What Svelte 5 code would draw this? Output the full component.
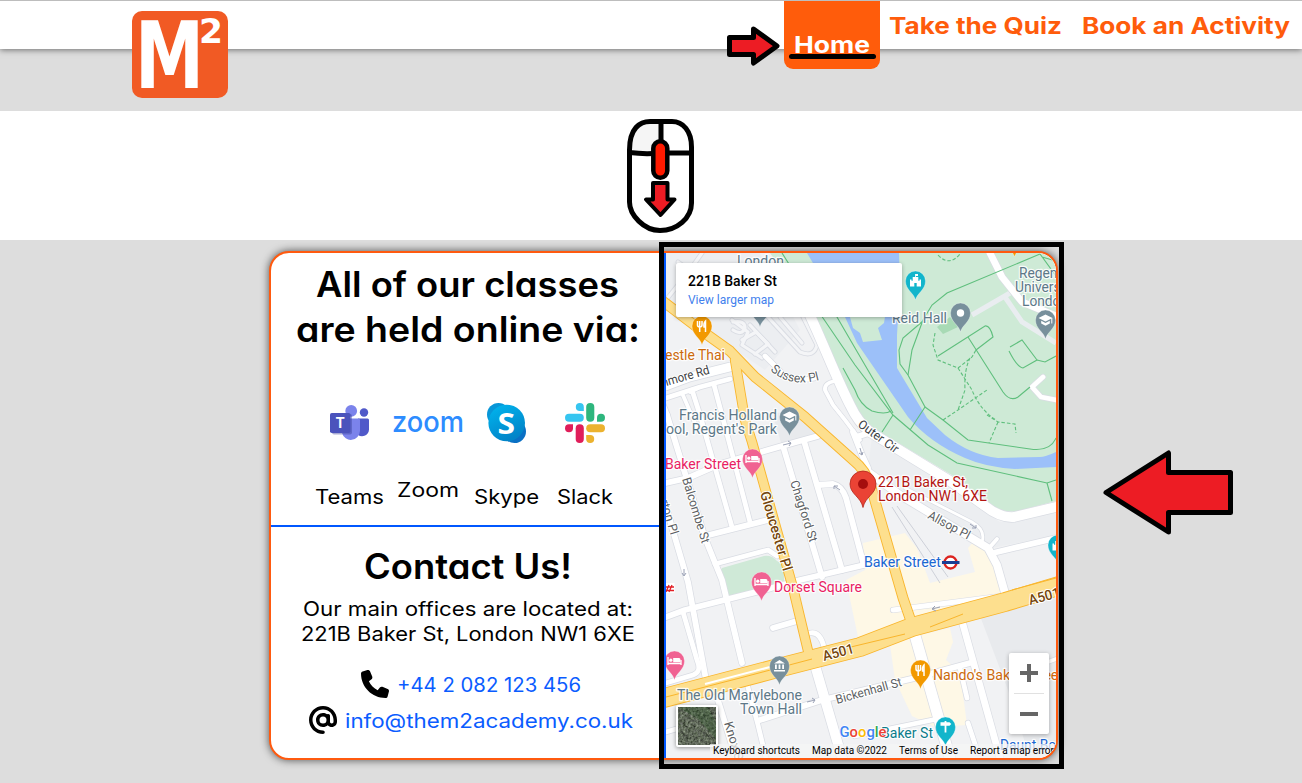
<script>
  const blocks = [
    '666,253 760,253 800,330 765,370 735,350 666,303',
  ];

  const minor = [
    ['M666,386 L690,377 L730,367', 9],
    ['M666,398 L700,387 L730,379', 5],
    ['M682,393 L698,430 M698,388 L690,392', 4],
    ['M667,415 L705,538 L722,580 L742,663', 6],
    ['M660,398 L667,415', 6],
    ['M692,390 L700,415 L732,527', 5],
    ['M714,385 L722,415 L750,522', 5],
    ['M666,483 L688,478 L720,464 L782,446 L818,436', 6],
    ['M705,536 L768,520', 6],
    ['M715,564 L768,550 L777,556', 5],
    ['M783,446 L822,577', 6],
    ['M804,441 L842,570', 6],
    ['M818,485 L833,484 Q842,486 846,498 L863,562', 6],
    ['M666,507 L688,582 L706,680', 6],
    ['M666,617 L685,610 L768,589 L800,580 L864,565', 6],
    ['M666,683 L693,675 Q702,672 697,660 L683,612', 5],
    ['M746,680 L758,725 L766,758', 5],
    ['M716,694 L736,758', 6],
    ['M773,628 L797,621', 6],
    ['M810,633 Q820,631 824,647', 5],
    ['M812,655 L842,758', 10],
    ['M666,732 L700,722', 5],
    ['M760,720 L822,700 L915,678 L970,663', 6],
    ['M914,632 L950,758', 11],
    ['M962,621 L1000,758', 7],
    ['M960,668 L967,698', 5],
    ['M968,723 L978,753', 5],
    ['M855,736 L937,719', 5],
    ['M1048,662 L1056,659', 4],
    ['M868,472 L900,495 L988,548 L997,565 L1005,593', 8],
    ['M993,553 L1056,538', 6],
    ['M990,547 L997,539', 4],
    ['M905,488 L972,522 Q986,530 982,542', 3],
    ['M853,432 L862,455 L868,468 M856,437 L872,432', 6],
    ['M805,305 C820,335 836,378 850,405 Q858,422 870,432 L950,481 L985,506 Q1000,518 1014,517 L1056,507', 10],
    ['M990,253 L1002,277 L1022,302 L1056,316', 7],
    ['M1043,377 L1032,387 L1041,397 L1056,400', 5],
    ['M815,378 Q790,384 777,368 L765,356', 5],
    ['M860,440 L845,420 L833,405 L825,390 Q824,383 835,381', 4],
    ['M893,610 L1010,595', 5],
  ];

  const lanes = [
    'M666,300 L690,270 L702,253', 'M678,262 L715,290', 'M732,320 L748,332 L742,345 L762,358', 'M742,340 L756,332 L768,344 L755,354',
    'M733,322 Q745,320 745,328 Q742,336 733,330', 'M768,317 L800,352 Q814,358 817,345 L803,317', 'M780,317 L802,343', 'M750,325 L775,352',
  ];

  const paths = [
    'M1040,254 L947,293 L932,305 L923,320 L912,350 L908,375',
    'M923,321 L903,338 L899,350 L900,364 L908,375 L925,407 L910,430',
    'M925,407 L943,420 L968,440 L1030,449 Q1050,452 1056,438',
    'M938,356 L985,326 Q990,325 993,337 L976,350',
    'M968,337 L1003,392 Q1010,402 1018,397 L1030,387',
    'M1010,347 L1022,340 L1037,360 L1023,368 Q1017,367 1009,351',
    'M1037,360 L1045,362 L1056,356',
    'M782,253 L823,318 L855,365 L893,415 L928,445 L957,463 L1047,483 L1056,480',
    'M830,305 L855,348 L893,413',
    'M843,368 L855,390 Q860,405 872,411 Q885,415 891,411',
    'M893,415 L882,432', 'M1047,483 L1052,501', 'M1040,254 L1056,276 M1042,257 L1056,261',
  ];

  const dashed = [
    'M935,333 L933,345 L938,360 L958,368 L972,357 L976,350', 'M970,358 Q964,370 965,390 L958,410',
    'M958,368 L972,390 Q980,410 996,420', 'M943,420 L958,410 L987,390', 'M987,415 L998,422 L1015,424 L1016,433', 'M998,422 L989,443',
    'M938,255 Q949,267 960,254',
  ];

  const major = [
    ['M735,360 L745,420 L752,442 L793,588 L809,655', 8.5],
    ['M660,299 L702,331 L730,351 L755,377 L805,417 L853,460 Q866,470 871,487 L903,598 L914,630', 9],
    ['M660,699 L778,668 L860,647 L912,627 L1005,602 L1062,585', 18],
  ];

  const pins = [
    { x: 760, y: 308, c: '#78909c', i: 'dot' }, { x: 702, y: 326, c: '#f29900', i: 'fork' },
    { x: 915.5, y: 281, c: '#12b5cb', i: 'castle' }, { x: 960.5, y: 313, c: '#78909c', i: 'dot' },
    { x: 1045.5, y: 320, c: '#78909c', i: 'cap' }, { x: 789.5, y: 417, c: '#78909c', i: 'cap' },
    { x: 752.5, y: 459, c: '#f06292', i: 'bed' }, { x: 761.5, y: 582, c: '#f06292', i: 'bed' },
    { x: 674.5, y: 661, c: '#f06292', i: 'bed' }, { x: 779.5, y: 666, c: '#78909c', i: 'hall' },
    { x: 920.5, y: 670, c: '#f29900', i: 'fork' }, { x: 945.5, y: 727, c: '#12b5cb', i: 'sign' },
    { x: 1058, y: 545, c: '#12b5cb', i: 'castle' }, { x: 1014.5, y: 238, c: '#f29900', i: 'dot' },
  ];

  const labels = [
    ['London', 737, 266, 47, 'poi'], ['Reid Hall', 892, 323, 55, 'poi'],
    ["Regent's", 1019, 278, 52, 'poi'], ['University', 1015, 292, 60, 'poi'], ['London', 1022, 306, 46, 'poi'],
    ['estle Thai', 665, 360, 60, 'food'], ['Francis Holland', 679, 420, 98, 'poi'], ["ool, Regent's Park", 666, 434, 111, 'poi'],
    ['Baker Street', 665, 469, 76, 'hotel'], ['Dorset Square', 774, 592, 88, 'hotel'],
    ['221B Baker St,', 878, 487, 90, 'red'], ['London NW1 6XE', 878, 501, 109, 'red'],
    ['Baker Street', 864, 567, 77, 'blue'], ['The Old Marylebone', 677, 700, 125, 'poi'], ['Town Hall', 740, 714, 62, 'poi'],
    ["Nando's Baker Street", 933, 680, 130, 'food'], ['Baker St', 881, 738, 52, 'teal'], ['Daunt Books', 1000, 750, 78, 'blue'],
  ];

  const streets = [
    ['nmore Rd', 663, 387, 49, -16, 'dark'], ['Balcombe St', 682, 479, 68, 73, ''], ['rton Pl', 660, 501, 36, 73, ''],
    ['Gloucester Pl', 760, 493, 82, 73.5, 'big'], ['Chagford St', 790, 482, 64, 72, ''],
    ['Outer Cir', 857, 426, 47, 36, 'dark'], ['Allsop Pl', 927, 518, 46, 28, ''],
    ['A501', 824, 661, 32, -15, 'big'], ['A501', 1030, 605, 32, -15, 'big'],
    ['Bickenhall St', 837, 704, 68, -15.5, ''], ['Knox St', 724, 723, 44, 73, ''],
  ];

  const terms = [['Keyboard shortcuts', 87], ['Map data ©2022', 75], ['Terms of Use', 59], ['Report a map error', 84]];
</script>

{#snippet fit(text, w, h, base, cls)}
  <svg class="fit {cls}" width={w} height={h}><text x="0" y={base} textLength={w} lengthAdjust="spacingAndGlyphs">{text}</text></svg>
{/snippet}

<header>
  <svg class="logo" width="96" height="87" viewBox="0 0 96 87">
    <rect width="96" height="87" rx="10" fill="#f15a24" />
    <text x="3" y="77" font-size="92" textLength="69" lengthAdjust="spacingAndGlyphs" class="logo-m">M</text>
    <text x="67" y="32" font-size="34" textLength="24" lengthAdjust="spacingAndGlyphs" class="logo-2">2</text>
  </svg>
  <nav>
    <a class="home" href="#home">{@render fit('Home', 76, 30, 24, 'nav')}</a>
    <a class="link" href="#quiz">{@render fit('Take the Quiz', 173, 30, 24, 'nav')}</a>
    <a class="link" href="#book">{@render fit('Book an Activity', 208, 30, 24, 'nav')}</a>
  </nav>
</header>

<section class="scroll">
  <svg width="68" height="116" viewBox="627 118 68 116">
    <path d="M629.500,153 V147 Q631,121.500 654,121.500 H661 V153Z" fill="#f5f5f5" />
    <path d="M629.500,150 C629.500,128 640,121.500 650,121.500 H672 C683,121.500 691.500,131 691.500,147 V203 C691.500,218 677,230.500 660,230.500 C644,230.500 629.500,215 629.500,202Z M629.500,152.500 Q645,154.500 660,153 H691 M661,121 V142" fill="none" stroke="#000" stroke-width="5" />
    <rect x="653.300" y="141.300" width="14" height="36.500" rx="7" fill="#ff1a00" stroke="#000" stroke-width="4.500" />
    <path d="M653,183 H667.500 V199.500 H674.500 L660.500,215 L646,199.500 H653Z" fill="#ed1c24" stroke="#000" stroke-width="4" stroke-linejoin="round" />
  </svg>
</section>

<main>
  <div class="card">
    <div class="info">
      <section class="classes">
        <h1>{@render fit('All of our classes', 303, 45, 36, 'title')}{@render fit('are held online via:', 344, 45, 36, 'title')}</h1>
        <div class="apps">
          <div class="app">
            <span class="icon">
              <svg width="40" height="36" viewBox="0 0 40 36">
                <circle cx="34" cy="7.500" r="4.200" fill="#5059c9" />
                <path d="M28,13.500 H37.500 Q39,13.500 39,15 V24.500 A7,7 0 0 1 28,30Z" fill="#5059c9" />
                <circle cx="21.200" cy="5.900" r="5.900" fill="#7b83eb" />
                <path d="M12,13.500 H28.500 Q30,13.500 30,15 V26 A9.200,9.600 0 0 1 12,28Z" fill="#7b83eb" />
                <rect x="2" y="9" width="20" height="20.500" rx="2" fill="#3d459c" opacity=".45" />
                <rect y="8" width="20.500" height="20" rx="1.800" fill="#4b53bc" />
                <text x="5.500" y="23" font-size="14" font-weight="700" fill="#fff">T</text>
              </svg>
            </span>
            {@render fit('Teams', 69, 25, 19, 'copy')}
          </div>
          <div class="app raised">
            <span class="icon"><svg width="72" height="40"><text class="zoomlogo" x="0" y="29" textLength="72" lengthAdjust="spacingAndGlyphs">zoom</text></svg></span>
            {@render fit('Zoom', 62, 25, 19, 'copy')}
          </div>
          <div class="app">
            <span class="icon">
              <svg width="40" height="40" viewBox="0 0 40 40">
                <defs><linearGradient id="sk" x1="0" y1="0" x2="0.500" y2="1"><stop offset="0" stop-color="#00b7f0" /><stop offset="1" stop-color="#0284c8" /></linearGradient></defs>
                <circle cx="11.500" cy="11.500" r="11.500" fill="#0796d8" /><circle cx="27.500" cy="28.500" r="11.500" fill="#0a70c4" />
                <circle cx="19.700" cy="20" r="18.300" fill="url(#sk)" />
                <text class="skype" x="10.500" y="30.500" textLength="17.500" lengthAdjust="spacingAndGlyphs">S</text>
              </svg>
            </span>
            {@render fit('Skype', 65, 25, 19, 'copy')}
          </div>
          <div class="app">
            <span class="icon">
              <svg width="40" height="40" viewBox="0 0 40 40">
                <path d="M14.800,0 A4,4 0 0 0 14.800,8 H18.800 V4 A4,4 0 0 0 14.800,0Z" fill="#36c5f0" /><rect y="10.700" width="18.800" height="8.100" rx="4" fill="#36c5f0" />
                <rect x="21.200" width="8.100" height="18.800" rx="4" fill="#2eb67d" /><path d="M40,14.800 A4,4 0 0 0 32,14.800 V18.800 H36 A4,4 0 0 0 40,14.800Z" fill="#2eb67d" />
                <rect x="21.200" y="21.200" width="18.800" height="8.100" rx="4" fill="#ecb22e" /><path d="M25.200,40 A4,4 0 0 0 25.200,32 H21.200 V36 A4,4 0 0 0 25.200,40Z" fill="#ecb22e" />
                <rect x="10.700" y="21.200" width="8.100" height="18.800" rx="4" fill="#e01e5a" /><path d="M0,25.200 A4,4 0 0 0 8,25.200 V21.200 H4 A4,4 0 0 0 0,25.200Z" fill="#e01e5a" />
              </svg>
            </span>
            {@render fit('Slack', 56, 25, 19, 'copy')}
          </div>
        </div>
      </section>
      <section class="contact">
        <h2>{@render fit('Contact Us!', 208, 45, 36, 'title')}</h2>
        <div class="address">{@render fit('Our main offices are located at:', 330, 25, 19, 'copy')}{@render fit('221B Baker St, London NW1 6XE', 334, 25, 19, 'copy')}</div>
        <div class="row">
          <svg width="28" height="28" viewBox="0 0 512 512"><path d="M164.9 24.6c-7.7-18.6-28-28.5-47.4-23.2l-88 24C12.1 30.2 0 46 0 64C0 311.4 200.6 512 448 512c18 0 33.8-12.1 38.6-29.5l24-88c5.3-19.4-4.6-39.7-23.2-47.4l-96-40c-16.3-6.8-35.2-2.1-46.3 11.6L304.7 368C234.3 334.7 177.3 277.7 144 207.3L193.3 167c13.7-11.2 18.4-30 11.6-46.3l-40-96z" /></svg>
          <a href="#tel">{@render fit('+44 2 082 123 456', 184, 36, 26, 'copy')}</a>
        </div>
        <div class="row">
          <svg width="28" height="28" viewBox="0 0 512 512"><path d="M256 64C150 64 64 150 64 256s86 192 192 192c17.700 0 32 14.300 32 32s-14.300 32-32 32C114.600 512 0 397.400 0 256S114.600 0 256 0S512 114.600 512 256v32c0 53-43 96-96 96c-29.300 0-55.600-13.200-73.200-33.900C320 371.100 289.500 384 256 384c-70.700 0-128-57.300-128-128s57.300-128 128-128c27.900 0 53.700 8.900 74.700 24.100c5.700-5 13.100-8.100 21.300-8.100c17.700 0 32 14.300 32 32v80 32c0 17.700 14.300 32 32 32s32-14.300 32-32V256c0-106-86-192-192-192zm64 192a64 64 0 1 0 -128 0 64 64 0 1 0 128 0z" /></svg>
          <a href="#mail">{@render fit('info@them2academy.co.uk', 288, 36, 26, 'copy')}</a>
        </div>
      </section>
    </div>

    <div class="map">
      <svg class="tiles" width="390" height="505" viewBox="666 253 390 505">
        <rect x="666" y="253" width="390" height="505" fill="#f1f2f4" />
        {#each blocks as b}<polygon points={b} fill="#eceef1" />{/each}
        <polygon points="772,412 800,415 825,433 782,446" fill="#e8eaed" />
        <polygon points="872,436 978,508 1000,522 1056,512 1056,535 992,548 940,515 868,468" fill="#eceef1" />
        <polygon points="980,616 1056,598 1056,758 1030,758 1008,690" fill="#e8eaed" />
        <polygon points="863,543 905,533 917,548 930,583 975,572 968,548 975,540 990,550 1003,597 912,624 858,637 846,580 865,570" fill="#fef8e6" />
        <polygon points="890,645 912,637 950,628 953,642 946,660 960,672 967,725 935,727 912,716 895,680" fill="#fef8e6" />
        <path d="M722,568 L764,556 Q772,555 777,561 L784,565 V583 L732,596 Q726,596 724,588 L719,573Z" fill="#cfe9d7" />
        <path d="M770,253 L814,317 L855,405 Q860,420 880,432 L955,477 L988,502 Q1002,514 1018,511 L1056,501 V253Z" fill="#ceead6" />
        <path d="M807,253 L845,317 L857,343 L908,417 Q930,443 965,458 Q985,467 1015,469 L1056,467 V452 Q1045,457 1040,457 L998,458 Q970,455 945,435 L927,418 L897,368 V335 L900,285 L899,253Z" fill="#9cc0f9" />
        <path d="M848,310 H886 L884,323 L878,328 L882,340 L863,342 L860,333 L853,328Z" fill="#ceead6" />
        <polygon points="950,317 958,327 943,334 937,327" fill="#a8dab5" />
        {#each lanes as d}<path {d} class="casing" stroke-width="5" />{/each}
        {#each lanes as d}<path {d} class="lane" stroke-width="3.200" />{/each}
        <path d="M972,315 L1010,293 M1005,297 L1022,322 L1056,343" fill="none" stroke="#e9edf0" stroke-width="5" />
        <path d="M892,507 L940,583 M897,506 L948,577" fill="none" stroke="#cdd0d8" stroke-width="1" />
        {#each minor as [d, w]}<path {d} class="casing" stroke-width={w + 1.2} />{/each}
        {#each minor as [d, w]}<path {d} class="road" stroke-width={w - 0.2} />{/each}
        {#each paths as d}<path {d} class="trail" />{/each}
        {#each dashed as d}<path {d} class="trail dash" />{/each}
        {#each major as [d, w]}<path {d} class="edge" stroke-width={w + 1.800} />{/each}
        {#each major as [d, w]}<path {d} class="main" stroke-width={w} />{/each}
        <path d="M666,697 L740,678 L812,659 M830,652 L905,634 M930,627 L963,614 M1012,590 L1056,578" fill="none" stroke="#f9b52c" />
        <path d="M705,684 L770,667" fill="none" stroke="#fff" stroke-width="2" />
        <g fill="none" stroke="#9aa1b5" stroke-width="1">
          <path d="M783,445 l8,-2 m-3,-2 l3,2 l-2,3 M684,569 v6 m-2,-2 l2,3 l2,-3 M807,702 l8,-2 m-3,-2 l3,2 l-2,3 M940,607 l-8,2 m3,-3 l-3,3 l4,2 M970,524 l6,4 m-4,0 h4 v-3 M840,490 l-6,-4 m0,3 v-3 h4 M860,448 l2,7 m-3,-2 l3,2 l1,-3" />
        </g>
        {#each streets as [t, x, y, w, a, c]}
          <text class="street {c}" transform="translate({x} {y}) rotate({a})" textLength={w} lengthAdjust="spacingAndGlyphs">{t}</text>
        {/each}
        <path id="sussex" d="M770,370 Q791,390 826,378" fill="none" />
        <text class="street"><textPath href="#sussex" textLength="53">Sussex Pl</textPath></text>
        {#each labels as [t, x, y, w, c]}<text class="label {c}" {x} {y} textLength={w} lengthAdjust="spacingAndGlyphs">{t}</text>{/each}
        {#each pins as p}
          <g transform="translate({p.x} {p.y})">
            <path d="M0,19 C-1.500,12 -10,9 -10,0 A10,10 0 0 1 10,0 C10,9 1.500,12 0,19Z" fill={p.c} stroke="#fff" stroke-opacity=".5" stroke-width=".6" />
            {#if p.i === 'dot'}<circle r="3.700" fill="#fff" />
            {:else if p.i === 'fork'}<path d="M-4.500,-5 V-1 Q-4.500,1 -2.300,1 V6 M-2.300,-5 V1 Q0,1 0,-1 V-5 M3.500,6 V-5 Q1.500,-3 2,1 H3.500" fill="none" stroke="#fff" stroke-width="1.500" />
            {:else if p.i === 'bed'}<path d="M-6.500,-4 V4 M-6.500,2.500 H6.500 M6.500,4 V-1" fill="none" stroke="#fff" stroke-width="1.300" /><circle cx="-3.700" cy="-.8" r="1.600" fill="#fff" /><path d="M-1.300,-3 H4.500 Q6,-3 6,-1 V1.300 H-1.300Z" fill="#fff" />
            {:else if p.i === 'cap'}<path d="M-7,-2 L0,-5.500 L7,-2 L0,1.500Z M-4.300,.8 L0,3 L4.300,.8 V3.500 L0,5.800 L-4.300,3.500Z" fill="#fff" /><path d="M6.300,-2 V3.500" stroke="#fff" />
            {:else if p.i === 'hall'}<path d="M-5.500,-2.500 L0,-6 L5.500,-2.500Z M-5.500,4 H5.500 V5.500 H-5.500Z M-4.500,-1.500 H-2.700 V3 H-4.500Z M-.9,-1.500 H.9 V3 H-.9Z M2.700,-1.500 H4.500 V3 H2.700Z" fill="#fff" />
            {:else if p.i === 'castle'}<path d="M-5.500,5.500 V-1.500 H-4 V-.3 H-2.800 V-4 H-.4 V-7 H2.500 V-5 H.4 V-4 H2.800 V-.3 H4 V-1.500 H5.500 V5.500 H1.200 V2 H-1.200 V5.500Z" fill="#fff" />
            {:else}<path d="M-.9,-6 H.9 V-4.800 H4 L5.800,-3 L4,-1.200 H.9 V5.500 H-.9 V-1.200 H-5 V-4.800 H-.9Z" fill="#fff" />{/if}
          </g>
        {/each}
        <path d="M863,507.500 C861,497 850,494 850,484 A13,13 0 0 1 876,484 C876,494 865,497 863,507.500Z" fill="#ea4335" stroke="#b3261b" stroke-width=".8" /><circle cx="863" cy="484" r="5" fill="#a50e0e" />
        <circle cx="950.500" cy="562.500" r="6" fill="#fff" stroke="#dc241f" stroke-width="2.400" /><rect x="942" y="561" width="17.500" height="3" fill="#1c3f94" />
        <rect x="664" y="583" width="10.500" height="10" fill="#fff" /><path d="M665,587 H674 M665,590.500 H674 M666,592 L669,585 M669,592 L672,585" stroke="#e21f26" stroke-width="1.300" />
        <text class="google" x="839.500" y="736.500" textLength="47" lengthAdjust="spacingAndGlyphs"><tspan fill="#4285f4">G</tspan><tspan fill="#ea4335">o</tspan><tspan fill="#fbbc04">o</tspan><tspan fill="#4285f4">g</tspan><tspan fill="#34a853">l</tspan><tspan fill="#ea4335">e</tspan></text>
      </svg>
      <div class="place">
        <strong>{@render fit('221B Baker St', 89, 18, 14, 'pt')}</strong>
        <a href="#map">{@render fit('View larger map', 86, 18, 14, 'pl')}</a>
      </div>
      <svg class="thumb" width="42" height="42" viewBox="0 0 42 42">
        <defs><filter id="sat" x="0" y="0" width="1" height="1" color-interpolation-filters="sRGB"><feTurbulence type="fractalNoise" baseFrequency=".4" numOctaves="4" seed="4" /><feColorMatrix values=".5 .3 0 0 -.03  .5 .35 0 0 -.02  .5 .25 0 0 -.03  0 0 0 0 1" /></filter></defs>
        <rect width="42" height="42" rx="2" fill="#fff" /><rect x="2" y="2" width="38" height="38" filter="url(#sat)" />
        <path d="M2,2 H32 L40,18 V34 L22,14Z" fill="#2b5629" opacity=".3" />
      </svg>
      <div class="zoomer">
        <svg width="40" height="40"><path d="M20,11 V29 M11,20 H29" stroke="#666" stroke-width="4" /></svg>
        <i></i>
        <svg width="40" height="40"><path d="M11,20 H29" stroke="#666" stroke-width="4" /></svg>
      </div>
      <div class="terms">{#each terms as [t, w]}{@render fit(t, w, 14, 10, 'tiny')}{/each}</div>
    </div>
  </div>
</main>

<div class="frame"></div>
<svg class="notes" width="1302" height="783">
  <path d="M729.500,37.500 H753.500 V29 L777,46 L753.500,63 V54.500 H729.500Z" />
  <path d="M1106,492.500 L1168.500,453 V472.500 H1230.500 V512.500 H1168.500 V532Z" />
  <path d="M791.500,56.500 H873.500" />
</svg>

<style>
  :global(body) { margin: 0; background: #ddd; overflow: hidden; font-family: Inter, "Open Sans", sans-serif; }
  :global(#app) { height: 783px; }
  a { text-decoration: none; color: inherit; }
  svg { display: block; }
  .fit { overflow: visible; fill: currentColor; }
  .nav { font-size: 23px; font-weight: 700; }
  .title { font-size: 35px; font-weight: 600; font-feature-settings: "cv11"; }
  .copy { font-size: 19.5px; font-weight: 400; }
  .pt { font: 500 14px Roboto, sans-serif; }
  .pl { font: 12px Roboto, sans-serif; }
  .tiny { font: 10px Roboto, sans-serif; flex: none; }

  header { position: relative; z-index: 1; box-sizing: border-box; height: 49px; display: flex; align-items: flex-start; justify-content: space-between; padding: 0 12px 0 132px; background: #fff; border-top: 1px solid #bdbdbd; box-shadow: 0 1px 6px rgba(0, 0, 0, .5); }
  .logo { margin-top: 10px; flex: none; }
  .logo-m { font-family: "DejaVu Sans Condensed", "DejaVu Sans", sans-serif; font-weight: 700; fill: #fff; }
  .logo-2 { font-family: "DejaVu Sans", sans-serif; font-weight: 700; fill: #fff; }
  nav { display: flex; align-items: flex-start; }
  .home { box-sizing: border-box; width: 96px; height: 68px; padding: 28px 10px 0; margin-right: 9px; color: #fff; background: #ff5c0b; border-radius: 0 0 9px 9px; }
  .link { padding-top: 9px; color: #ff5c0b; }
  .link + .link { margin-left: 20px; }

  .scroll { box-sizing: border-box; height: 129px; margin-top: 62px; padding: 7px 0 0 627px; background: #fff; }
  main { padding: 11px 0 0 269px; }
  .card { box-sizing: border-box; width: 789px; height: 509px; display: flex; overflow: hidden; background: #fff; border: 2px solid #ff5a0f; border-radius: 20px; box-shadow: 0 0 9px rgba(0, 0, 0, .65); }
  .info { width: 393px; flex: none; }
  .classes { box-sizing: border-box; height: 274px; padding-top: 8px; border-bottom: 2px solid #0057ff; }
  h1, h2 { margin: 0; display: flex; flex-direction: column; align-items: center; }
  .apps { display: grid; grid-template-columns: repeat(4, 78.5px); justify-content: center; margin-top: 52px; }
  .app { display: flex; flex-direction: column; align-items: center; gap: 42px; }
  .raised { gap: 35px; }
  .icon { height: 40px; display: flex; align-items: center; }
  .zoomlogo { font: 500 28.5px Inter, sans-serif; fill: #2d8cff; }
  .skype { font: 700 28px "Open Sans", sans-serif; fill: #fff; }
  .contact { padding-top: 16px; }
  .address { margin: 9px 0 19px; display: flex; flex-direction: column; align-items: center; }
  .row { display: flex; justify-content: center; align-items: center; gap: 8px; height: 36px; padding-left: 7px; }
  .row a { color: #0a5cff; }

  .map { position: relative; flex: none; width: 390px; height: 505px; border-left: 2px solid #0057ff; overflow: hidden; border-radius: 0 18px 18px 0; }
  .casing, .lane, .road, .main, .edge { fill: none; stroke-linejoin: round; stroke-linecap: round; }
  .casing { stroke: #d9dce3; }
  .lane { stroke: #f4f5f7; }
  .road { stroke: #fff; }
  .edge { stroke: #f9b52c; }
  .main { stroke: #fddf8e; }
  .trail { fill: none; stroke: #5fbf7d; stroke-width: 1.1; }
  .dash { stroke-dasharray: 3.5 2; }
  .label { font: 14px Roboto, sans-serif; paint-order: stroke; stroke: rgba(255, 255, 255, .85); stroke-width: 2.5px; stroke-linejoin: round; }
  .street { font: 12.5px Roboto, sans-serif; fill: #5c5f63; paint-order: stroke; stroke: #fff; stroke-width: 2px; }
  .dark { fill: #3c4043; }
  .big { font-size: 14px; font-weight: 500; fill: #74450b; }
  .poi { fill: #5d7888; }
  .food { fill: #cc6a0c; }
  .hotel { fill: #e91e63; }
  .red { fill: #b31412; }
  .blue { fill: #1a67d2; }
  .teal { fill: #0c7d8b; }
  .google { font: 500 15px Roboto, sans-serif; paint-order: stroke; stroke: #fff; stroke-width: 1.5px; }
  .place { position: absolute; left: 10px; top: 10px; box-sizing: border-box; width: 226px; height: 54px; padding: 9px 12px; background: #fff; border-radius: 2px; box-shadow: 0 1px 4px rgba(0, 0, 0, .3); color: #000; }
  .place a { color: #427fed; }
  .thumb { position: absolute; left: 10px; top: 452px; filter: drop-shadow(0 1px 2px rgba(0, 0, 0, .4)); }
  .zoomer { position: absolute; left: 343px; top: 400px; width: 40px; height: 81px; background: #fff; border-radius: 2px; box-shadow: 0 1px 4px rgba(0, 0, 0, .3); }
  .zoomer i { display: block; height: 1px; margin: 0 5px; background: #e1e1e1; }
  .terms { position: absolute; right: 0; bottom: 0; height: 14px; width: 346px; display: flex; gap: 12px; padding-left: 3px; box-sizing: border-box; background: rgba(245, 245, 245, .72); color: #000; }

  .frame { position: absolute; left: 659px; top: 242px; width: 395px; height: 517px; border: 5px solid #000; z-index: 2; }
  .notes { position: absolute; left: 0; top: 0; z-index: 3; pointer-events: none; fill: #ed1c24; stroke: #000; stroke-width: 5; stroke-linejoin: round; stroke-linecap: round; }
</style>
